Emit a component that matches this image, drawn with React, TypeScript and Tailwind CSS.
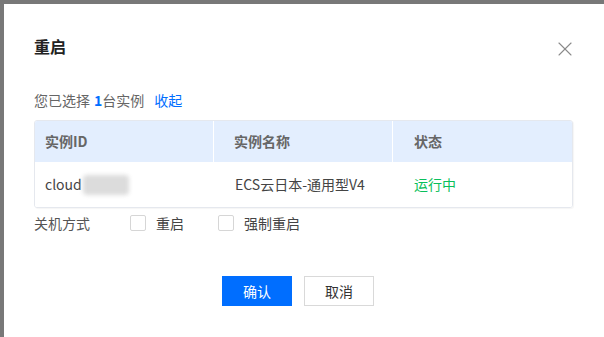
import { X } from 'lucide-react'

const font = { fontFamily: '"Noto Sans CJK SC", "Noto Sans", sans-serif' }

export default function App() {
    return (
        <div className="w-[604px] h-[337px] overflow-hidden bg-[#787878] pl-1 pt-1" style={font}>
            <div className="w-[600px] h-[333px] bg-white px-[30px] pt-[30px]">
                <div className="flex h-6 items-start justify-between">
                    <h2 className="text-[16px] leading-6 font-bold text-[#222]">重启</h2>
                    <button type="button" className="mt-[3px] mr-[-3px] text-[#8a8a8a]">
                        <X className="h-6 w-6" strokeWidth={1.1} />
                    </button>
                </div>
                <div className="mt-[32px] flex items-center text-[14px] leading-5 text-[#666]">
                    <span>您已选择</span>
                    <span className="ml-1 font-bold text-[#006eff]">1</span>
                    <span>台实例</span>
                    <a className="ml-[10px] text-[#006eff]">收起</a>
                </div>
                <div className="mt-[10px] w-[539px] overflow-hidden rounded-[3px] border border-[#e5e8ee] shadow-[1px_1px_1px_rgba(0,0,0,0.04)]">
                    <div className="grid h-[41px] grid-cols-3 bg-[#e3eefe] text-[14px] font-bold text-[#666]">
                        <div className="flex items-center border-r border-white pl-[10px]">实例ID</div>
                        <div className="flex items-center border-r border-white pl-[20px]">实例名称</div>
                        <div className="flex items-center pl-[21px]">状态</div>
                    </div>
                    <div className="grid h-[45px] grid-cols-3 bg-white text-[14px] text-[#444]">
                        <div className="flex items-center pl-[10px]">
                            <span>cloud</span>
                            <span className="ml-[1px] h-[20px] w-[46px] rounded-sm bg-[#dcdcdc] blur-[2px]" />
                        </div>
                        <div className="flex items-center pl-[21px]">ECS云日本-通用型V4</div>
                        <div className="flex items-center pl-[21px] text-[#0abf5b]">运行中</div>
                    </div>
                </div>
                <div className="mt-[5px] flex items-center text-[14px] leading-5 text-[#444]">
                    <span className="text-[#555]">关机方式</span>
                    <label className="ml-[40px] flex items-center">
                        <span className="h-4 w-4 rounded-[2px] border border-[#d6d6d6] bg-white" />
                        <span className="ml-[10px]">重启</span>
                    </label>
                    <label className="ml-[34px] flex items-center">
                        <span className="h-4 w-4 rounded-[2px] border border-[#d6d6d6] bg-white" />
                        <span className="ml-[10px]">强制重启</span>
                    </label>
                </div>
                <div className="mt-[43px] flex gap-3 pl-[188px] text-[14px]">
                    <button type="button" className="h-[30px] w-[70px] bg-[#006eff] text-white">
                        确认
                    </button>
                    <button type="button" className="h-[30px] w-[70px] border border-[#d9d9d9] bg-white text-[#333]">
                        取消
                    </button>
                </div>
            </div>
        </div>
    )
}
